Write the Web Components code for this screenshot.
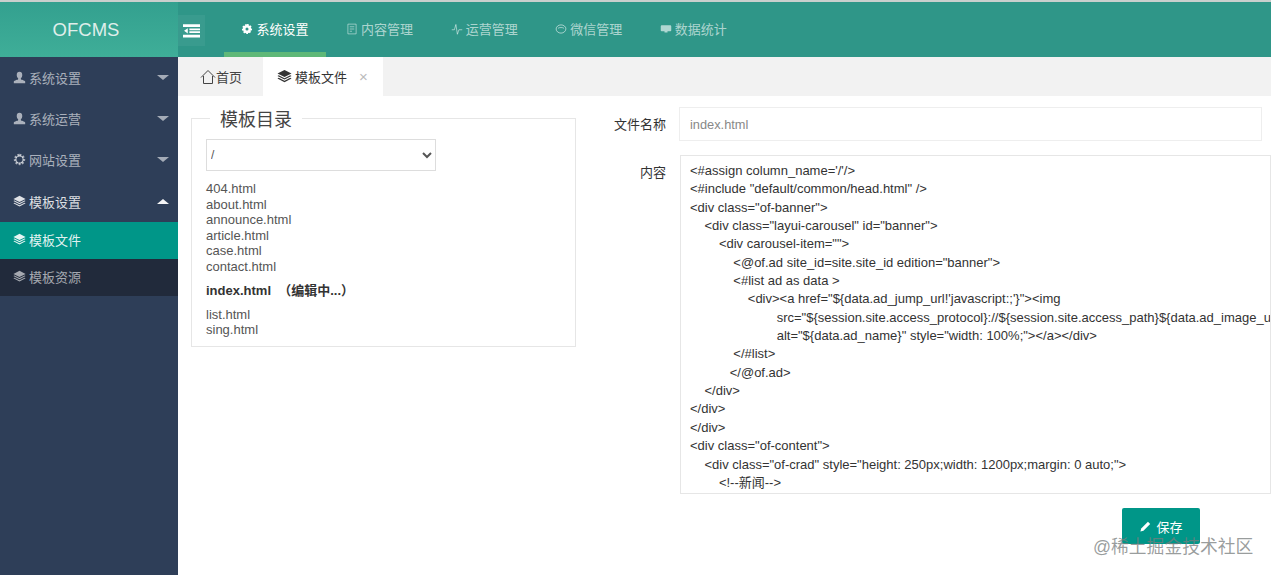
<!DOCTYPE html>
<html lang="zh"><head><meta charset="utf-8"><title>OFCMS</title>
<style>
html,body{margin:0;padding:0;height:100%;overflow:hidden;background:#fff}
body{font:13px "Liberation Sans","Noto Sans CJK SC",sans-serif;color:#333}
</style></head><body>
<of-app></of-app>
<script>
const ICONS={
 user:'<path fill="currentColor" d="M8 1c2.200 0 3.400 1.500 3.400 3.800 0 1.700-.7 3.200-1.700 3.900v1.400c0 .6 4.800 1.300 5.300 2.800V15H1v-2.100c.5-1.500 5.300-2.200 5.300-2.800V8.700C5.300 8 4.600 6.500 4.600 4.800 4.600 2.500 5.800 1 8 1z"/>',
 gear:'<path fill="none" stroke="currentColor" stroke-width="3" stroke-dasharray="2.200 1.700" d="M8 2.500a5.500 5.500 0 1 1 0 11a5.500 5.500 0 1 1 0-11z"/><circle cx="8" cy="8" r="4.500" fill="none" stroke="currentColor" stroke-width="1.500"/>',
 gearSolid:'<path fill="none" stroke="currentColor" stroke-width="2.500" stroke-dasharray="2.200 1.700" d="M8 2.500a5.500 5.500 0 1 1 0 11a5.500 5.500 0 1 1 0-11z"/><path fill="currentColor" fill-rule="evenodd" d="M8 2.500a5.500 5.500 0 1 1 0 11a5.500 5.500 0 1 1 0-11zM8 6a2 2 0 1 0 0 4a2 2 0 1 0 0-4z"/>',
 layers:'<path fill="currentColor" d="M8 1 15.500 4.800 8 8.600.5 4.800z"/><path fill="currentColor" d="M1.800 6.700 8 9.800l6.200-3.100 1.300.8L8 11.300.5 7.500z"/><path fill="currentColor" d="M1.800 9.400 8 12.500l6.200-3.100 1.300.8L8 14 .5 10.200z"/>',
 doc:'<path fill="none" stroke="currentColor" d="M2.500 1.500h11v13h-11z"/><path fill="none" stroke="currentColor" d="M5 5h6M5 8h6M5 11h3"/>',
 pulse:'<path fill="none" stroke="currentColor" stroke-width="1.100" d="M1 9h3.500L6.500 2 8.500 15l2-6h4.500"/>',
 wechat:'<path fill="none" stroke="currentColor" stroke-width="1.200" d="M8 2.500c3.600 0 6.500 2.300 6.500 5.300S11.600 13.500 8 13.500 1.500 11 1.500 8 4.400 2.500 8 2.500z"/><path fill="none" stroke="currentColor" stroke-width="1.100" d="M4 7c2-1.300 6-1.300 8 0"/>',
 screen:'<path fill="currentColor" d="M2.500 3h11c.8 0 1.500.6 1.500 1.400v5.200c0 .8-.7 1.400-1.500 1.400H10v1.500H6V11H2.500C1.700 11 1 10.400 1 9.600V4.400C1 3.600 1.700 3 2.500 3z"/>',
 home:'<path fill="none" stroke="currentColor" stroke-width="1" d="M1 8.500 8 1.500l7 7M3.500 7v7.500h9V7"/>',
 menu:'<path fill="currentColor" d="M0 2h16v2.600H0zM6 6.200h10v1.600H6zM6 8.800h10v1.600H6zM0 12h16v2.600H0zM4.500 5.800v5L1 8.300z"/>',
 pen:'<path fill="currentColor" d="M11 2.200 13.800 5 5.500 13.300 1.700 14.300 2.700 10.500z"/>'
};
class OfIcon extends HTMLElement{
 constructor(){super();this.attachShadow({mode:'open'})}
 connectedCallback(){const s=this.getAttribute('size')||14;
  this.shadowRoot.innerHTML=`<style>:host{display:inline-flex;flex:none}svg{display:block}</style><svg width="${s}" height="${s}" viewBox="0 0 16 16">${ICONS[this.getAttribute('name')]||''}</svg>`}
}
customElements.define('of-icon',OfIcon);

class OfNavItem extends HTMLElement{
 constructor(){super();this.attachShadow({mode:'open'}).innerHTML=`<style>
 :host{display:flex;align-items:center;justify-content:center;gap:3px;width:102px;margin-right:2.600px;height:100%;box-sizing:border-box;color:rgba(255,255,255,.62);font-size:13px;border-bottom:5px solid transparent;padding-top:3px}
 :host([active]){color:#fff;border-bottom-color:#5fb878}
 </style><slot name="i"></slot><slot></slot>`}
}
customElements.define('of-nav-item',OfNavItem);

class OfHeader extends HTMLElement{
 constructor(){super();this.attachShadow({mode:'open'}).innerHTML=`<style>
 :host{display:flex;height:55px;background:#2f9688;flex:none}
 .logo{width:178px;box-sizing:border-box;padding-right:6px;flex:none;display:flex;align-items:center;justify-content:center;font-size:18.500px;color:#dfeeea;background:linear-gradient(180deg,#33a08f,#3fae98)}
 .tog{width:27px;flex:none;margin:13px 0 11px;background:rgba(255,255,255,.05);display:flex;align-items:center;justify-content:center;color:#fff;padding-bottom:1px;box-sizing:border-box}
 nav{display:flex;margin-left:19px;height:100%}
 </style><div class="logo">OFCMS</div><div class="tog"><of-icon name="menu" size="17"></of-icon></div>
 <nav>
 <of-nav-item active><of-icon slot="i" name="gearSolid" size="12"></of-icon>系统设置</of-nav-item>
 <of-nav-item><of-icon slot="i" name="doc" size="12"></of-icon>内容管理</of-nav-item>
 <of-nav-item><of-icon slot="i" name="pulse" size="12"></of-icon>运营管理</of-nav-item>
 <of-nav-item><of-icon slot="i" name="wechat" size="12"></of-icon>微信管理</of-nav-item>
 <of-nav-item><of-icon slot="i" name="screen" size="12"></of-icon>数据统计</of-nav-item>
 </nav>`}
}
customElements.define('of-header',OfHeader);

class OfSideItem extends HTMLElement{
 constructor(){super();this.attachShadow({mode:'open'}).innerHTML=`<style>
 :host{display:flex;align-items:center;gap:3px;height:41px;padding:0 9px 0 13px;color:rgba(255,255,255,.6);font-size:13px;box-sizing:border-box}
 :host([open]){color:rgba(255,255,255,.85)}
 :host([sub]){height:37px;background:#212a3b;padding-bottom:2px}
 :host([current]){background:#009688;color:rgba(255,255,255,.9)}
 .t{flex:1}
 .c{width:0;height:0;border:6px solid transparent;border-top:5px solid currentColor;border-bottom:0;opacity:.95}
 :host([open]) .c{border-top:0;border-bottom:5px solid #fff}
 :host([sub]) .c{display:none}
 </style><slot name="i"></slot><span class="t"><slot></slot></span><span class="c"></span>`}
}
customElements.define('of-side-item',OfSideItem);

class OfSidebar extends HTMLElement{
 constructor(){super();this.attachShadow({mode:'open'}).innerHTML=`<style>
 :host{display:block;width:178px;flex:none;background:#2e3e58}
 </style>
 <of-side-item><of-icon slot="i" name="user" size="13"></of-icon>系统设置</of-side-item>
 <of-side-item><of-icon slot="i" name="user" size="13"></of-icon>系统运营</of-side-item>
 <of-side-item><of-icon slot="i" name="gear" size="13"></of-icon>网站设置</of-side-item>
 <of-side-item open style="height:42px"><of-icon slot="i" name="layers" size="13"></of-icon>模板设置</of-side-item>
 <of-side-item sub current><of-icon slot="i" name="layers" size="13"></of-icon>模板文件</of-side-item>
 <of-side-item sub><of-icon slot="i" name="layers" size="13"></of-icon>模板资源</of-side-item>`}
}
customElements.define('of-sidebar',OfSidebar);

class OfTabs extends HTMLElement{
 constructor(){super();this.attachShadow({mode:'open'}).innerHTML=`<style>
 :host{display:flex;height:39px;background:#f2f2f2;flex:none;font-size:13px;color:#333}
 .t{display:flex;align-items:center;box-sizing:border-box}
 .h{width:85px;padding-left:22px;color:#444}
 .a{width:120px;background:#fff;padding-left:14px;gap:3px}
 .x{color:#bbb;font-size:15px;margin-left:9px;line-height:1}
 </style><div class="t h"><of-icon name="home" size="16"></of-icon>首页</div>
 <div class="t a"><of-icon name="layers" size="15"></of-icon>模板文件<span class="x">×</span></div>`}
}
customElements.define('of-tabs',OfTabs);

class OfTree extends HTMLElement{
 constructor(){super();this.attachShadow({mode:'open'}).innerHTML=`<style>
 :host{display:block;width:385px;flex:none;margin:8px 0 0 13px}
 fieldset{margin:0;padding:0 14px 8px;border:1px solid #e6e6e6;box-sizing:border-box}
 legend{font-size:18px;color:#444;padding:4px 10px 0;margin-left:4px;line-height:24px}
 select{display:block;width:230px;height:32px;border:1px solid #ddd;background:#fff;color:#555;font:12px "Liberation Sans",sans-serif;padding:0;margin-top:7px;border-radius:0}
 ul{list-style:none;margin:10px 0 0;padding:0;color:#555;line-height:15.600px;font-size:13px}
 .b{font-weight:bold;color:#333;margin:8px 0 8px;line-height:16px}
 </style><fieldset><legend>模板目录</legend>
 <select><option>/</option></select>
 <ul><li>404.html</li><li>about.html</li><li>announce.html</li><li>article.html</li><li>case.html</li><li>contact.html</li>
 <li class="b">index.html &nbsp;（编辑中...）</li><li>list.html</li><li>sing.html</li></ul></fieldset>`}
}
customElements.define('of-tree',OfTree);

const CODE=`<#assign column_name='/'/>
<#include "default/common/head.html" />
<div class="of-banner">
    <div class="layui-carousel" id="banner">
        <div carousel-item="">
            <@of.ad site_id=site.site_id edition="banner">
            <#list ad as data >
                <div><a href="\${data.ad_jump_url!'javascript:;'}"><img
                        src="\${session.site.access_protocol}://\${session.site.access_path}\${data.ad_image_url}"
                        alt="\${data.ad_name}" style="width: 100%;"></a></div>
            </#list>
           </@of.ad>
    </div>
</div>
</div>
<div class="of-content">
    <div class="of-crad" style="height: 250px;width: 1200px;margin: 0 auto;">
        <!--新闻-->`;

class OfEditor extends HTMLElement{
 constructor(){super();this.attachShadow({mode:'open'}).innerHTML=`<style>
 :host{display:block;flex:1;min-width:0;padding-top:11px}
 .row{display:flex}
 label{width:90px;flex:none;text-align:right;font-size:13px;color:#333;line-height:35px;margin-right:13px}
 .in{width:583px;height:34px;border:1px solid #eee;box-sizing:border-box;padding-left:10px;line-height:33px;color:#888;font-size:12.800px}
 .ta{width:700px;height:339px;margin:13px 0 0 1px;border:1px solid #e6e6e6;box-sizing:border-box;padding:6px 9px;white-space:pre;overflow:hidden;color:#333;line-height:18.350px;font-size:13px}
 .r2 label{margin-top:13px}
 .foot{display:flex;margin:14px 0 0 546px}
 button{width:78px;height:36px;background:#009688;border:0;border-radius:2px;color:#fff;font:13px "Liberation Sans","Noto Sans CJK SC",sans-serif;display:flex;align-items:center;justify-content:center;gap:4px;padding:0}
 </style>
 <div class="row"><label>文件名称</label><div class="in">index.html</div></div>
 <div class="row r2"><label>内容</label><div class="ta" id="c"></div></div>
 <div class="foot"><button><of-icon name="pen" size="13"></of-icon>保存</button></div>`;
 this.shadowRoot.getElementById('c').textContent=CODE}
}
customElements.define('of-editor',OfEditor);

class OfApp extends HTMLElement{
 constructor(){super();this.attachShadow({mode:'open'}).innerHTML=`<style>
 :host{display:flex;flex-direction:column;height:575px;width:1271px;overflow:hidden;border-top:2px solid #c9cfcd;box-sizing:border-box;position:relative}
 .m{display:flex;flex:1;min-height:0}
 .c{flex:1;min-width:0;display:flex;flex-direction:column;overflow:hidden}
 .b{display:flex;flex:1;min-height:0}
 .wm{position:absolute;left:1093px;top:533px;font-size:17.800px;line-height:24px;color:rgba(120,125,125,.75);white-space:nowrap}
 </style><of-header></of-header><div class="m"><of-sidebar></of-sidebar><div class="c"><of-tabs></of-tabs><div class="b"><of-tree></of-tree><of-editor></of-editor></div></div></div><div class="wm">@稀土掘金技术社区</div>`}
}
customElements.define('of-app',OfApp);
</script></body></html>
